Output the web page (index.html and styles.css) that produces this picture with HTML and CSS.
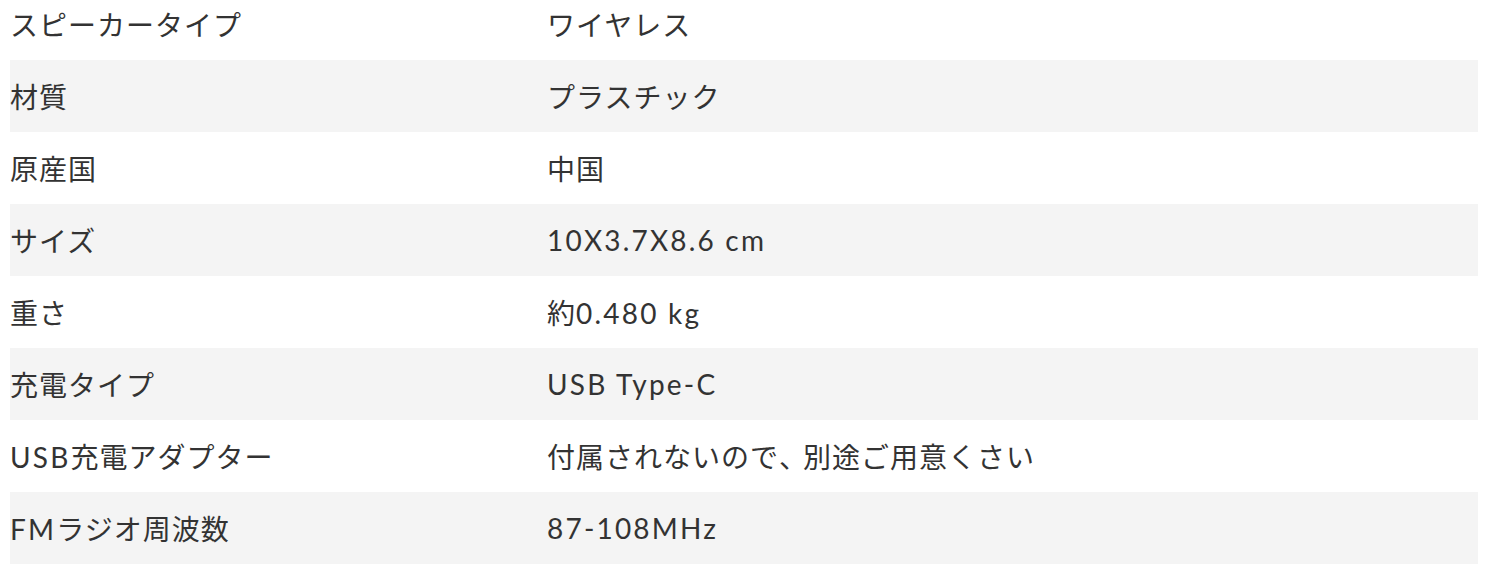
FILE: index.html
```html
<!DOCTYPE html>
<html lang="ja">
<head>
<meta charset="utf-8">
<link rel="stylesheet" href="styles.css">
</head>
<body>
<div class="specs">
  <div class="row"><div class="label">スピーカータイプ</div><div class="value">ワイヤレス</div></div>
  <div class="row alt"><div class="label">材質</div><div class="value">プラスチック</div></div>
  <div class="row"><div class="label">原産国</div><div class="value">中国</div></div>
  <div class="row alt"><div class="label">サイズ</div><div class="value"><span class="en">10X3.7X8.6 cm</span></div></div>
  <div class="row"><div class="label">重さ</div><div class="value">約<span class="en">0.480 kg</span></div></div>
  <div class="row alt"><div class="label">充電タイプ</div><div class="value"><span class="en">USB Type-C</span></div></div>
  <div class="row"><div class="label"><span class="en">USB</span>充電アダプター</div><div class="value">付属されないので<span class="comma">、</span>別途ご用意くさい</div></div>
  <div class="row alt"><div class="label"><span class="en">FM</span>ラジオ周波数</div><div class="value"><span class="en">87-108MHz</span></div></div>
</div>
</body>
</html>
```
FILE: styles.css
```css
html, body {
  margin: 0;
  padding: 0;
  background: #ffffff;
}
body {
  font-family: "Lato", "Noto Sans CJK JP", sans-serif;
  color: #333333;
  font-size: 28px;
  letter-spacing: 1px;
}
.specs {
  margin: -12px 8px 0 10px;
  display: flex;
  flex-direction: column;
}
.row {
  display: grid;
  grid-template-columns: 537px 1fr;
  height: 72px;
  align-items: center;
}
.row.alt {
  background: #f4f4f4;
}
.label, .value {
  white-space: nowrap;
}
.en {
  letter-spacing: 2.2px;
}
.comma {
  letter-spacing: -4px;
}
```
